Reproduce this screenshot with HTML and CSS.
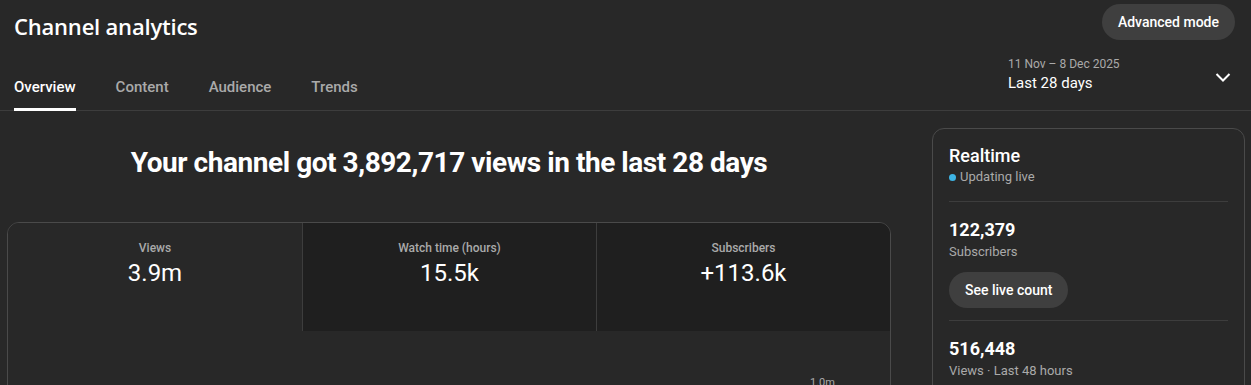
FILE: index.html
```html
<!DOCTYPE html>
<html lang="en">
<head>
  <meta charset="UTF-8" />
  <meta name="viewport" content="width=device-width, initial-scale=1.0">
  <title>Channel analytics</title>
  <link rel="stylesheet" href="styles.css">
</head>
<body>
  <div class="top">
    <h1 class="page-title">Channel analytics</h1>
    <button class="pill-btn">Advanced mode</button>
  </div>

  <div class="nav">
    <div class="tabs">
      <div class="tab active">Overview</div>
      <div class="tab">Content</div>
      <div class="tab">Audience</div>
      <div class="tab">Trends</div>
    </div>
    <div class="period">
      <div class="period-text">
        <div class="period-range">11 Nov – 8 Dec 2025</div>
        <div class="period-label">Last 28 days</div>
      </div>
      <svg class="chevron" width="24" height="24" viewBox="0 0 24 24">
        <path d="M5.5 9 L12 15.5 L18.5 9" fill="none" stroke="#fff" stroke-width="2"/>
      </svg>
    </div>
  </div>

  <div class="main">
    <div class="left">
      <h2 class="headline">Your channel got 3,892,717 views in the last 28 days</h2>
      <div class="chart-card">
        <div class="metrics">
          <div class="metric selected">
            <div class="metric-label">Views</div>
            <div class="metric-value">3.9m</div>
          </div>
          <div class="metric">
            <div class="metric-label">Watch time (hours)</div>
            <div class="metric-value">15.5k</div>
          </div>
          <div class="metric">
            <div class="metric-label">Subscribers</div>
            <div class="metric-value">+113.6k</div>
          </div>
        </div>
        <div class="chart">
          <span class="axis-label">1.0m</span>
        </div>
      </div>
    </div>

    <div class="realtime">
      <div class="rt-title">Realtime</div>
      <div class="rt-live"><span class="dot"></span>Updating live</div>
      <div class="rt-divider"></div>
      <div class="rt-number">122,379</div>
      <div class="rt-caption">Subscribers</div>
      <button class="pill-btn small">See live count</button>
      <div class="rt-divider"></div>
      <div class="rt-number">516,448</div>
      <div class="rt-caption">Views · Last 48 hours</div>
    </div>
  </div>
</body>
</html>
```

FILE: styles.css
```css
html, body {
  margin: 0;
  padding: 0;
  background: #282828;
  color: #fff;
  font-family: Roboto, 'Liberation Sans', sans-serif;
  overflow: hidden;
  height: 100%;
}
.top {
  display: flex;
  justify-content: space-between;
  align-items: flex-start;
  padding: 4px 16px 0 14px;
  height: 44px;
}
.page-title {
  margin: 7px 0 0;
  font-family: 'Open Sans', sans-serif;
  font-size: 22px;
  font-weight: 600;
  letter-spacing: -0.2px;
  line-height: 30px;
}
.pill-btn {
  background: #3f3f3f;
  color: #fff;
  border: none;
  border-radius: 18px;
  height: 36px;
  padding: 0 16px;
  font-family: Roboto, sans-serif;
  font-size: 14px;
  font-weight: 500;
  cursor: pointer;
}
.nav {
  display: flex;
  justify-content: space-between;
  height: 62px;
  border-bottom: 1px solid #3d3d3d;
  padding: 0 16px 0 14px;
}
.tabs {
  display: flex;
  gap: 40px;
}
.tab {
  font-size: 15px;
  font-weight: 500;
  color: #aaa;
  padding-top: 30px;
  box-sizing: border-box;
  line-height: 18px;
  height: 63px;
  border-bottom: 3px solid transparent;
}
.tab.active {
  color: #fff;
  border-bottom-color: #fff;
}
.period {
  display: flex;
  align-items: center;
  width: 227px;
  justify-content: space-between;
  padding-bottom: 4px;
}
.period-text {
  margin-top: -4px;
}
.period-range {
  font-size: 12px;
  color: #aaa;
  line-height: 16px;
}
.period-label {
  font-size: 15px;
  line-height: 22px;
}
.main {
  display: flex;
  gap: 41px;
  padding: 17px 6px 0 7px;
}
.left {
  flex: 1;
}
.headline {
  margin: 17px 0 0;
  text-align: center;
  font-size: 28px;
  font-weight: 700;
  letter-spacing: -0.45px;
  line-height: 36px;
}
.chart-card {
  margin-top: 41px;
  border: 1px solid #4a4a4a;
  border-radius: 12px;
  overflow: hidden;
  height: 300px;
}
.metrics {
  display: grid;
  grid-template-columns: 1fr 1fr 1fr;
  height: 108px;
}
.metric {
  background: #1f1f1f;
  border-left: 1px solid #3d3d3d;
  text-align: center;
  padding-top: 17px;
}
.metric.selected {
  background: #282828;
  border-left: none;
}
.metric-label {
  font-size: 12px;
  font-weight: 500;
  color: #aaa;
  line-height: 16px;
}
.metric-value {
  font-size: 24px;
  line-height: 30px;
  margin-top: 2px;
}
.chart {
  position: relative;
  height: 190px;
}
.axis-label {
  position: absolute;
  left: 802px;
  top: 45px;
  font-size: 11px;
  color: #aaa;
}
.realtime {
  width: 313px;
  box-sizing: border-box;
  border: 1px solid #4a4a4a;
  border-radius: 12px;
  padding: 15px 16px 0 16px;
  height: 300px;
}
.rt-title {
  font-size: 18px;
  font-weight: 500;
  line-height: 24px;
}
.rt-live {
  font-size: 13px;
  color: #aaa;
  line-height: 18px;
  display: flex;
  align-items: center;
  gap: 4px;
}
.dot {
  width: 7px;
  height: 7px;
  border-radius: 50%;
  background: #3eb4e4;
}
.rt-divider {
  height: 1px;
  background: #3d3d3d;
  margin: 15px 0 16px;
}
.rt-number {
  font-size: 18px;
  font-weight: 700;
  line-height: 24px;
  margin-bottom: 1px;
}
.rt-caption {
  font-size: 13px;
  color: #aaa;
  line-height: 18px;
}
.pill-btn.small {
  margin-top: 11px;
  margin-bottom: -3px;
}
```
